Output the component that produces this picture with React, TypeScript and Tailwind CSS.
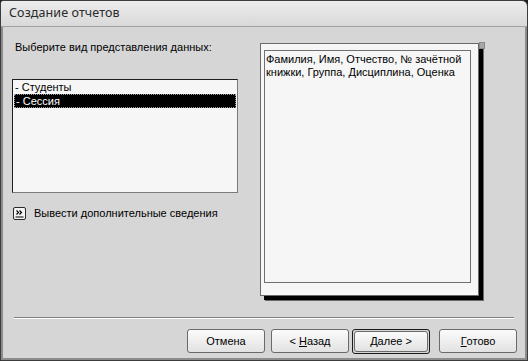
import React from 'react';

const ui = { fontFamily: '"Liberation Sans", Arial, sans-serif' };

const Btn = ({ children, def = false, className = '' }: { children: React.ReactNode; def?: boolean; className?: string }) => (
  <div className={`${def ? 'border border-[#1a1a1a] rounded-[3px] p-px' : ''} ${className}`}>
    <div
      className={`flex items-center justify-center rounded-[3px] border border-[#6a6a6a] bg-gradient-to-b from-[#fbfbfb] to-[#e2e2e2] text-[11px] text-black ${def ? 'w-[74px] h-[21px]' : 'w-[78px] h-[24px]'}`}
    >
      {children}
    </div>
  </div>
);

export default function App() {
  return (
    <div className="w-[528px] h-[361px] bg-[#1e1e1e]" style={ui}>
      <div className="w-[528px] h-[361px] flex flex-col border border-[#3c3c3c] rounded-tr-[6px] rounded-tl-[3px] overflow-hidden">
        {/* title bar */}
        <div className="h-[26px] flex items-center pl-[8px] bg-gradient-to-b from-[#ececec] to-[#d9d9d9] border-b border-[#a2a2a2]">
          <span className="text-[12.5px] text-[#2a2a2a] tracking-[0.1px]" style={{ fontFamily: '"Noto Sans", sans-serif' }}>
            Создание отчетов
          </span>
        </div>

        {/* body */}
        <div className="flex-1 flex flex-col bg-[#d6d6d6] border-l-2 border-r-2 border-b-2 border-[#8c8c8c]">
          <div className="flex h-[291px]">
            {/* left column */}
            <div className="w-[248px] pl-[9px] pt-[13px] flex flex-col">
              <div className="text-[11px] text-black pl-[3px] leading-[14px]">Выберите вид представления данных:</div>
              <div className="mt-[25px] w-[226px] h-[114px] bg-[#f6f6f6] border border-t-[#1e1e1e] border-l-[#1e1e1e] border-r-[#7a7a7a] border-b-[#7a7a7a] p-px text-[11px] leading-[13px]">
                <div className="h-[13px] pl-[1px] text-black">- Студенты</div>
                <div className="h-[14px] pl-[1px] bg-black text-white border border-dotted border-[#9a9a9a] leading-[12px]">- Сессия</div>
              </div>
              <div className="mt-[12px] flex items-center gap-[8px] pl-[1px]">
                <svg width="13" height="13" viewBox="0 0 13 13">
                  <rect x="0.5" y="0.5" width="12" height="12" rx="1.5" fill="#f4f4f4" stroke="#2a2a2a" />
                  <path d="M3.5 3.5 L5.5 5.5 L3.5 7.5 M6.5 3.5 L8.5 5.5 L6.5 7.5" fill="none" stroke="#000" strokeWidth="1.2" />
                  <line x1="2.5" y1="10" x2="10.5" y2="10" stroke="#000" strokeWidth="1" />
                </svg>
                <span className="text-[11px] text-black">Вывести дополнительные сведения</span>
              </div>
            </div>

            {/* preview paper */}
            <div className="pl-[9px] pt-[16px]">
              <div className="relative w-[219px] h-[253px] bg-[#f6f6f6] border border-[#6a6a6a] shadow-[4px_4px_0_#000,5px_5px_0_#6a6a6a] pl-[3px] pt-[6px] pr-[7px] pb-[12px] flex">
                <div className="absolute right-[-7px] top-[-2px] w-[6px] h-[7px] bg-[#a8a8a8] border border-[#8a8a8a]" />
                <div className="flex-1 border border-[#707070] pl-[1px] pt-[2px] text-[11px] leading-[13px] text-black">
                  Фамилия, Имя, Отчество, № зачётной книжки, Группа, Дисциплина, Оценка
                </div>
              </div>
            </div>
          </div>

          {/* separator */}
          <div className="mx-[11px] mt-[-1px] border-t border-[#808080] border-b border-b-white" />

          {/* buttons */}
          <div className="flex items-start pt-[10px] pl-[184px]">
            <Btn>Отмена</Btn>
            <Btn className="ml-[6px]">
              &lt; <span className="underline ml-[3px]">Н</span>азад
            </Btn>
            <Btn def className="ml-[3px]">
              <span className="underline">Д</span>алее &gt;
            </Btn>
            <Btn className="ml-[9px]">
              <span className="underline">Г</span>отово
            </Btn>
          </div>
        </div>
      </div>
    </div>
  );
}
